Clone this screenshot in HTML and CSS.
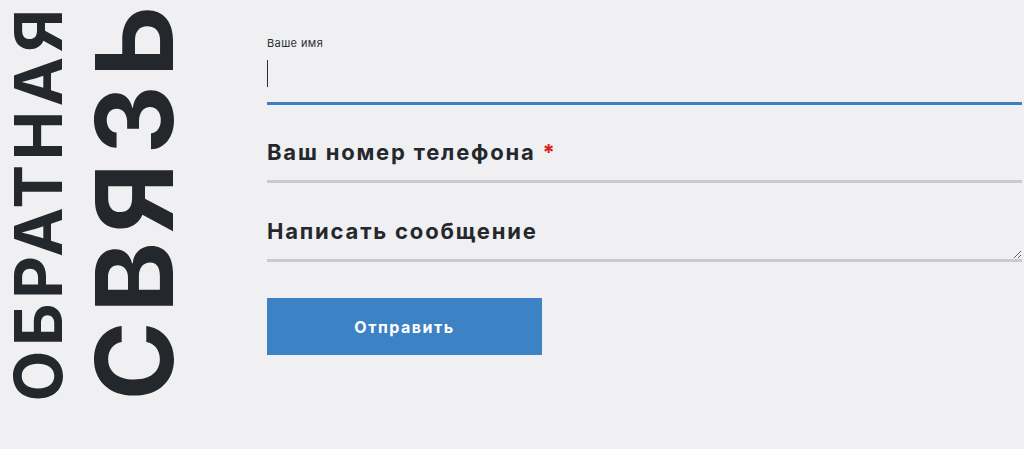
FILE: index.html
```html
<!DOCTYPE html>
<html lang="ru">
<head>
<meta charset="utf-8">
<link rel="stylesheet" href="styles.css">
</head>
<body>
<div class="page">
  <div class="title">
    <h2 class="title-small">Обратна<span class="last">я</span></h2>
    <h1 class="title-big">Связ<span class="last">ь</span></h1>
  </div>
  <form class="form">
    <div class="label-small">Ваше имя</div>
    <div class="field field-name"><span class="caret"></span></div>
    <div class="field field-phone"><span class="field-label">Ваш номер телефона <span class="req">*</span></span></div>
    <textarea class="field-message" rows="1" placeholder="Написать сообщение"></textarea>
    <button type="button" class="submit">Отправить</button>
  </form>
</div>
</body>
</html>
```

FILE: styles.css
```css
* { box-sizing: border-box; }
html, body {
  margin: 0;
  padding: 0;
  background: #f0f0f2;
  font-family: Inter, "Noto Sans", sans-serif;
  color: #24282d;
}
.page {
  display: flex;
  width: 1024px;
  height: 449px;
  overflow: hidden;
}
.title {
  width: 267px;
  flex: none;
  display: flex;
  align-items: flex-end;
  height: 401px;
  padding-left: 14px;
  gap: 33px;
}
.title h1, .title h2 {
  margin: 0;
  writing-mode: vertical-rl;
  transform: rotate(180deg);
  text-transform: uppercase;
  font-weight: 700;
  white-space: nowrap;
}
.title .last {
  letter-spacing: 0;
}
.title-small {
  font-size: 66px;
  line-height: 48px;
  width: 48px;
  letter-spacing: 4.6px;
}
.title-big {
  font-size: 107px;
  line-height: 78px;
  width: 78px;
  letter-spacing: 8.6px;
}
.form {
  width: 755px;
  flex: none;
  padding-top: 36px;
  display: flex;
  flex-direction: column;
}
.label-small {
  font-size: 11px;
  line-height: 14px;
  height: 12px;
  letter-spacing: 0.4px;
  color: #2b2f33;
}
.field {
  border-bottom: 3px solid #c9cccd;
}
.field-name {
  height: 57px;
  padding-top: 12px;
  border-bottom-color: #3b7fc2;
}
.caret {
  display: block;
  width: 1px;
  height: 27px;
  background: #2b2f33;
}
.field-phone {
  padding-top: 33px;
  padding-bottom: 14px;
}
.field-label {
  display: block;
  font-size: 22px;
  line-height: 28px;
  font-weight: 700;
  letter-spacing: 1.8px;
}
.req { color: #e01b1b; }
.field-message {
  display: block;
  width: 100%;
  height: 79px;
  margin: 0;
  padding: 34px 0 14px;
  border: none;
  border-bottom: 3px solid #c9cccd;
  background: transparent;
  font-family: Inter, "Noto Sans", sans-serif;
  font-size: 22px;
  line-height: 28px;
  font-weight: 700;
  letter-spacing: 1.8px;
  color: #24282d;
  outline: none;
  resize: vertical;
}
.field-message::placeholder {
  color: #24282d;
  opacity: 1;
}
.submit {
  margin-top: 36px;
  width: 275px;
  height: 57px;
  border: none;
  border-radius: 0;
  background: #3d82c4;
  color: #ffffff;
  font-family: Inter, "Noto Sans", sans-serif;
  font-size: 16px;
  font-weight: 700;
  letter-spacing: 1.5px;
  cursor: pointer;
  padding: 0;
}
```
